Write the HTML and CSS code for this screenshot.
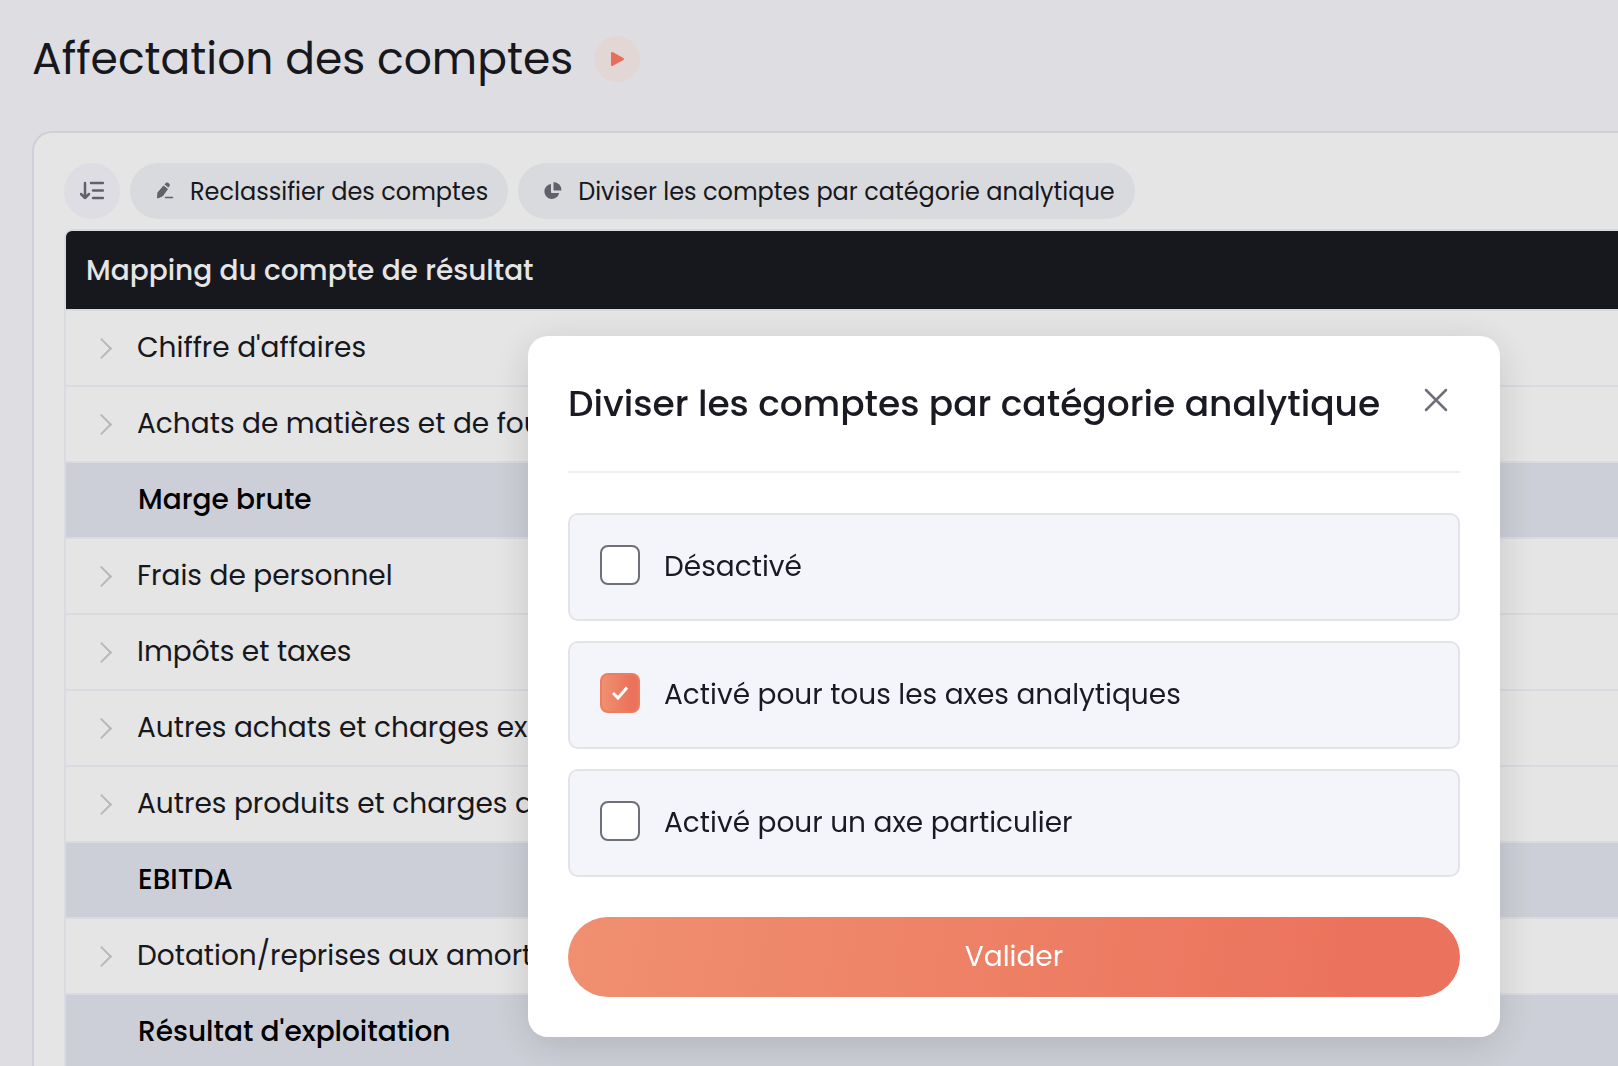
FILE: index.html
```html
<!DOCTYPE html>
<html lang="fr">

<head>
    <title>Affectation des comptes</title>
    <meta charset="UTF-8">
    <meta name="viewport" content="width=device-width, initial-scale=1.0">
    <link rel="stylesheet" href="styles.css">
</head>

<body>
    <header class="page-header">
        <h1>Affectation des comptes</h1>
        <button type="button" class="play" aria-label="Voir la vidéo">
            <svg width="16" height="16" viewBox="0 0 16 16">
                <path d="M3 2v12l11-6z" fill="#ff7c62" stroke="#ff7c62" stroke-width="2" stroke-linejoin="round" />
            </svg>
        </button>
    </header>

    <main class="panel">
        <div class="toolbar">
            <button type="button" class="tool round" aria-label="Trier">
                <svg width="24" height="20" viewBox="0 0 24 20" fill="none" stroke="#6d6e75" stroke-width="2.500" stroke-linecap="round" stroke-linejoin="round">
                    <path d="M5 2v15M1 13l4 4 4-4M11 2h12M13 9.500h10M13 17h10" />
                </svg>
            </button>
            <button type="button" class="tool">
                <svg width="20" height="20" viewBox="0 0 20 20" fill="#6d6e75">
                    <path d="M8.500 5L12.500 8 7.500 15 2.500 17 3 11.500z" stroke="#6d6e75" stroke-linejoin="round" />
                    <path d="M9.500 3.500L11 1.800Q12 1 13.200 1.800L14.500 3Q15.300 4 14.500 5L13.500 6.500z" />
                    <path d="M10.500 16.500h7" stroke="#6d6e75" stroke-width="1.500" stroke-linecap="round" />
                </svg>
                Reclassifier des comptes
            </button>
            <button type="button" class="tool">
                <svg width="20" height="20" viewBox="0 0 20 20" fill="#6d6e75">
                    <path d="M8 3v8q0 1 1 1h7.200A7.500 7.500 0 1 1 8 3z" />
                    <path d="M10.500 1A8 8 0 0 1 18.500 9.500H11.500q-1 0-1-1z" />
                </svg>
                Diviser les comptes par catégorie analytique
            </button>
        </div>

        <table class="mapping">
            <thead>
                <tr>
                    <th colspan="2">Mapping du compte de résultat</th>
                </tr>
            </thead>
            <tbody>
                <tr>
                    <td class="toggle"><button type="button" class="chevron" aria-label="Déplier"></button></td>
                    <td>Chiffre d'affaires</td>
                </tr>
                <tr>
                    <td class="toggle"><button type="button" class="chevron" aria-label="Déplier"></button></td>
                    <td>Achats de matières et de fournitures</td>
                </tr>
                <tr class="total">
                    <td class="toggle"></td>
                    <td>Marge brute</td>
                </tr>
                <tr>
                    <td class="toggle"><button type="button" class="chevron" aria-label="Déplier"></button></td>
                    <td>Frais de personnel</td>
                </tr>
                <tr>
                    <td class="toggle"><button type="button" class="chevron" aria-label="Déplier"></button></td>
                    <td>Impôts et taxes</td>
                </tr>
                <tr>
                    <td class="toggle"><button type="button" class="chevron" aria-label="Déplier"></button></td>
                    <td>Autres achats et charges externes</td>
                </tr>
                <tr>
                    <td class="toggle"><button type="button" class="chevron" aria-label="Déplier"></button></td>
                    <td>Autres produits et charges d'exploitation</td>
                </tr>
                <tr class="total">
                    <td class="toggle"></td>
                    <td>EBITDA</td>
                </tr>
                <tr>
                    <td class="toggle"><button type="button" class="chevron" aria-label="Déplier"></button></td>
                    <td>Dotation/reprises aux amortissements</td>
                </tr>
                <tr class="total">
                    <td class="toggle"></td>
                    <td>Résultat d'exploitation</td>
                </tr>
            </tbody>
        </table>
    </main>

    <div class="overlay">
        <form class="modal" role="dialog" aria-labelledby="modal-title">
            <div class="modal-header">
                <h2 id="modal-title">Diviser les comptes par catégorie analytique</h2>
                <button type="button" class="close" aria-label="Fermer">
                    <svg width="24" height="24" viewBox="0 0 24 24" stroke="#6f6f78" stroke-width="2.500" stroke-linecap="round">
                        <path d="M2 2l20 20M22 2L2 22" />
                    </svg>
                </button>
            </div>
            <div class="options">
                <label class="option"><input type="checkbox" name="off">Désactivé</label>
                <label class="option"><input type="checkbox" name="all" checked>Activé pour tous les axes analytiques</label>
                <label class="option"><input type="checkbox" name="one">Activé pour un axe particulier</label>
            </div>
            <button type="button" class="submit">Valider</button>
        </form>
    </div>
</body>

</html>
```
FILE: styles.css
```css
* {
    box-sizing: border-box;
}

html,
body {
    height: 100%;
}

body {
    margin: 0;
    overflow: hidden;
    background-color: #f6f7fc;
    color: #1a1a22;
    font-family: Poppins, Inter, sans-serif;
    font-size: 28px;
}

button {
    border: 0;
    padding: 0;
    background: none;
    color: inherit;
    font: inherit;
    cursor: pointer;
}

h1,
h2 {
    margin: 0;
}

.page-header {
    display: flex;
    align-items: center;
    gap: 21px;
    padding: 28px 32px 42px;
}

h1 {
    font-size: 44px;
    font-weight: 400;
    line-height: 61px;
}

.play {
    display: flex;
    align-items: center;
    justify-content: center;
    width: 46px;
    height: 46px;
    border-radius: 50%;
    background-color: #fdf0ef;
}

.panel {
    margin-left: 32px;
    padding: 30px 0 0 30px;
    border: 2px solid #e6e8f0;
    border-right: 0;
    border-top-left-radius: 20px;
    background-color: #fff;
}

.toolbar {
    display: flex;
    gap: 10px;
    margin-bottom: 10px;
}

.tool {
    display: flex;
    align-items: center;
    gap: 15px;
    height: 56px;
    padding: 0 20px 0 25px;
    border-radius: 28px;
    background-color: #f2f3f8;
    font-size: 24px;
    white-space: nowrap;
}

.tool.round {
    justify-content: center;
    width: 56px;
    padding: 0;
    background-color: #f6f7fd;
}

.mapping {
    width: 100%;
    border: 2px solid #f3f4fb;
    border-right: 0;
    border-top-left-radius: 8px;
    border-spacing: 0;
}

.mapping th {
    height: 78px;
    padding: 2px 20px 0;
    border-top-left-radius: 6px;
    background-color: #1a1a22;
    color: #fff;
    font-weight: 500;
    text-align: left;
}

.mapping td {
    height: 76px;
    padding: 0;
    border-top: 2px solid #f3f4fb;
    white-space: nowrap;
}

.mapping .toggle {
    width: 71px;
    padding-left: 28px;
}

.chevron {
    display: block;
    width: 15px;
    height: 15px;
    border: solid #cbcdd3;
    border-width: 2px 2px 0 0;
    transform: rotate(45deg);
}

.total td {
    padding-left: 1px;
    background-color: #e4e7f0;
    color: #000;
    font-weight: 500;
}

.overlay {
    position: fixed;
    inset: 0;
    display: flex;
    align-items: flex-start;
    padding: 336px 118px 0 528px;
    background-color: rgba(0, 0, 0, 0.1);
}

.modal {
    flex: 1;
    padding: 40px;
    border-radius: 20px;
    background-color: #fff;
    box-shadow: 0 8px 40px rgba(0, 0, 0, 0.14);
}

.modal-header {
    display: flex;
    align-items: flex-start;
    justify-content: space-between;
    height: 97px;
    border-bottom: 2px solid #eeeff3;
}

h2 {
    font-size: 36px;
    font-weight: 500;
    line-height: 56px;
    white-space: nowrap;
}

.close {
    display: flex;
    padding: 12px;
}

.options {
    display: flex;
    flex-direction: column;
    gap: 20px;
    margin: 40px 0;
}

.option {
    display: flex;
    align-items: flex-start;
    gap: 24px;
    padding: 30px;
    border: 2px solid #e3e4ea;
    border-radius: 10px;
    background-color: #f4f5fb;
    line-height: 44px;
}

.option input {
    appearance: none;
    width: 40px;
    height: 40px;
    margin: 0;
    border: 2px solid #6f6f78;
    border-radius: 8px;
    background-color: #fff;
}

.option input:checked {
    border-color: #ee7d60;
    background: url("data:image/svg+xml,%3Csvg xmlns='http://www.w3.org/2000/svg' width='16' height='14' fill='none' stroke='white' stroke-width='3'%3E%3Cpath d='M1 7l5 5 9-10.500'/%3E%3C/svg%3E") center no-repeat, linear-gradient(90deg, #f09070, #eb725c 80%);
}

.submit {
    display: block;
    width: 100%;
    height: 80px;
    border-radius: 40px;
    background: linear-gradient(100deg, #f09070, #eb725c 90%);
    color: #fff;
}
```
